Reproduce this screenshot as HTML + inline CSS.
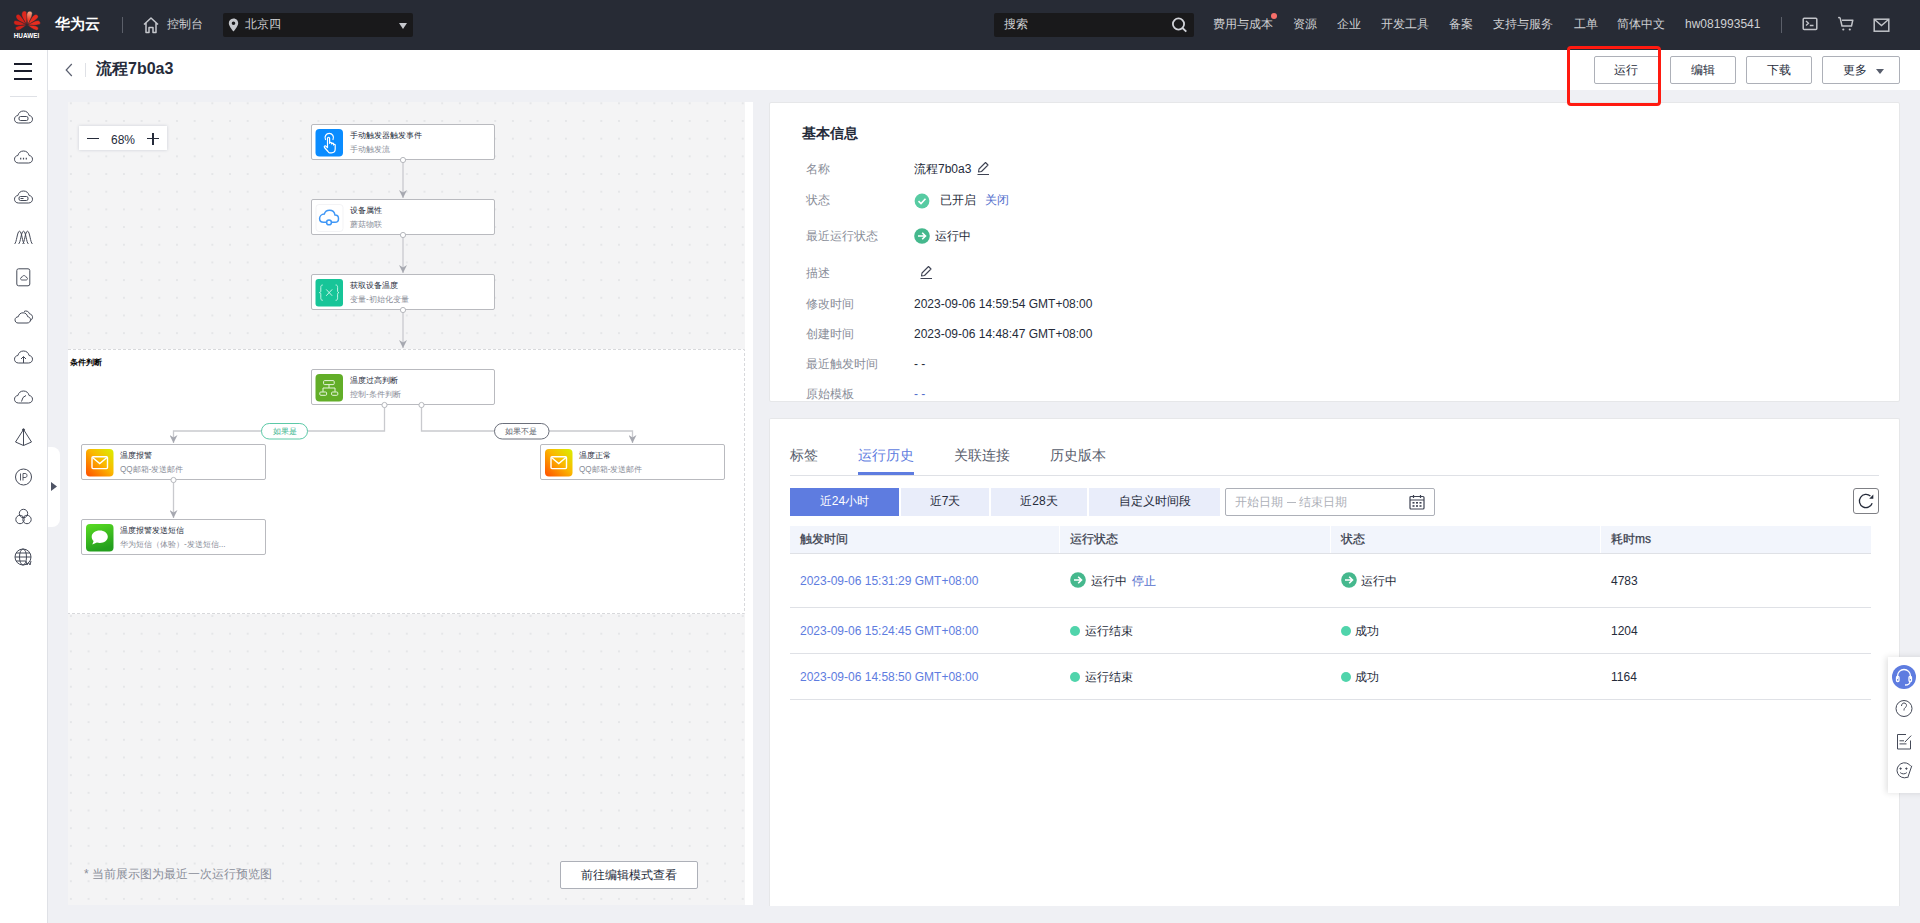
<!DOCTYPE html>
<html><head><meta charset="utf-8">
<style>
*{box-sizing:border-box;margin:0;padding:0}
html,body{width:1920px;height:923px;overflow:hidden;background:#eff0f4;font-family:"Liberation Sans",sans-serif;color:#252b3a;position:relative}
.a{position:absolute;white-space:nowrap}
#hdr{position:absolute;left:0;top:0;width:1920px;height:50px;background:#272b35}
.ht{position:absolute;top:16px;font-size:12px;line-height:17px;color:#cfd0d3;white-space:nowrap}
#side{position:absolute;left:0;top:50px;width:48px;height:873px;background:#fff;border-right:1px solid #dfe1e6}
#titlebar{position:absolute;left:48px;top:50px;width:1872px;height:40px;background:#fff}
.btn{position:absolute;top:56px;height:28px;border:1px solid #adb0b8;border-radius:2px;background:#fff;font-size:12px;line-height:26px;text-align:center;color:#252b3a}
#canvas{position:absolute;left:68px;top:102px;width:677px;height:803px;background:#f4f4f5}
#canvasStrip{position:absolute;left:745px;top:102px;width:8px;height:803px;background:#fff}
.panel{position:absolute;background:#fff;border:1px solid #e6e7e9;border-radius:2px;overflow:hidden}
.sico{position:absolute;left:13px;width:20px;height:20px}
.lbl{position:absolute;left:806px;font-size:12px;line-height:16px;color:#8a8e99;white-space:nowrap}
.val{position:absolute;left:914px;font-size:12px;line-height:16px;color:#252b3a;white-space:nowrap}
.nt{position:absolute;font-size:8.16px;line-height:11px;color:#252b3a;white-space:nowrap}
.ns{position:absolute;margin-top:1px;font-size:8.16px;line-height:10px;color:#8a8e99;white-space:nowrap}
.tab{position:absolute;top:446px;font-size:14px;line-height:19px;color:#575d6c;white-space:nowrap}
.seg{position:absolute;top:488px;height:28px;background:#e9edfa;font-size:12px;line-height:26px;text-align:center;color:#252b3a}
.th{position:absolute;top:531px;font-size:12px;line-height:16px;font-weight:normal;color:#3a3f4e;-webkit-text-stroke:0.25px #3a3f4e;white-space:nowrap}
.td{position:absolute;font-size:12px;line-height:16px;color:#252b3a;white-space:nowrap}
.lnk{color:#526ecc}
</style></head>
<body>
<div id="hdr">
  <svg class="a" style="left:13px;top:10px" width="28" height="30" viewBox="0 0 28 30">
    <defs><linearGradient id="lgp" x1="0" y1="0" x2="0" y2="1"><stop offset="0" stop-color="#f6b090"/><stop offset="0.6" stop-color="#f0402a"/></linearGradient></defs>
    <g stroke="#272b35" stroke-width="0.45">
    <path transform="translate(13.3 15) rotate(-10)" d="M0 0 C-0.99 -4.83 -4.12 -9.66 -1.98 -13.11 C-0.66 -14.49 1.98 -14.49 2.47 -12.42 C2.97 -8.28 1.32 -4.14 0 0Z" fill="#e0281e"/>
    <path transform="translate(14.7 15) rotate(10)" d="M0 0 C-0.99 -4.83 -4.12 -9.66 -1.98 -13.11 C-0.66 -14.49 1.98 -14.49 2.47 -12.42 C2.97 -8.28 1.32 -4.14 0 0Z" fill="url(#lgp)"/>
    <path transform="translate(13.5 15) rotate(-45)" d="M0 0 C-0.90 -4.83 -3.75 -9.66 -1.80 -13.11 C-0.60 -14.49 1.80 -14.49 2.25 -12.42 C2.70 -8.28 1.20 -4.14 0 0Z" fill="#d42219"/>
    <path transform="translate(14.5 15) rotate(45)" d="M0 0 C-0.90 -4.83 -3.75 -9.66 -1.80 -13.11 C-0.60 -14.49 1.80 -14.49 2.25 -12.42 C2.70 -8.28 1.20 -4.14 0 0Z" fill="#e82d1f"/>
    <path transform="translate(13.7 15) rotate(-78)" d="M0 0 C-0.84 -4.55 -3.50 -9.10 -1.68 -12.35 C-0.56 -13.65 1.68 -13.65 2.10 -11.70 C2.52 -7.80 1.12 -3.90 0 0Z" fill="#d42219"/>
    <path transform="translate(14.3 15) rotate(78)" d="M0 0 C-0.84 -4.55 -3.50 -9.10 -1.68 -12.35 C-0.56 -13.65 1.68 -13.65 2.10 -11.70 C2.52 -7.80 1.12 -3.90 0 0Z" fill="#e82d1f"/>
    <path transform="translate(13.7 15) rotate(-110)" d="M0 0 C-0.75 -4.02 -3.12 -8.05 -1.50 -10.92 C-0.50 -12.08 1.50 -12.08 1.88 -10.35 C2.25 -6.90 1.00 -3.45 0 0Z" fill="#d42219"/>
    <path transform="translate(14.3 15) rotate(110)" d="M0 0 C-0.75 -4.02 -3.12 -8.05 -1.50 -10.92 C-0.50 -12.08 1.50 -12.08 1.88 -10.35 C2.25 -6.90 1.00 -3.45 0 0Z" fill="#e82d1f"/>
    </g>
    <text x="13.5" y="28" text-anchor="middle" font-family="Liberation Sans" font-weight="bold" font-size="6.3" fill="#fff" textLength="25.5" lengthAdjust="spacingAndGlyphs">HUAWEI</text>
  </svg>
  <div class="a" style="left:55px;top:14px;font-size:15px;line-height:20px;color:#fff;font-weight:bold">华为云</div>
  <div class="a" style="left:122px;top:17px;width:1px;height:16px;background:#5b5f69"></div>
  <svg class="a" style="left:142px;top:16px" width="18" height="18" viewBox="0 0 18 18"><path d="M2 8.5 L9 2 L16 8.5 M4 7 V16.5 H7 V11.5 H11 V16.5 H14 V7" fill="none" stroke="#c6c8cd" stroke-width="1.5" stroke-linejoin="round"/></svg>
  <div class="ht" style="left:167px">控制台</div>
  <div class="a" style="left:223px;top:13px;width:190px;height:24px;background:#19191b;border-radius:2px"></div>
  <svg class="a" style="left:228px;top:18px" width="12" height="14" viewBox="0 0 12 14"><path d="M5.5 0.5 C2.5 0.5 0.8 2.7 0.8 5.2 C0.8 8.3 5.5 13.5 5.5 13.5 C5.5 13.5 10.2 8.3 10.2 5.2 C10.2 2.7 8.5 0.5 5.5 0.5Z M5.5 3.4 A1.8 1.8 0 1 1 5.5 7 A1.8 1.8 0 1 1 5.5 3.4Z" fill="#c6c8cd" fill-rule="evenodd"/></svg>
  <div class="ht" style="left:245px">北京四</div>
  <svg class="a" style="left:399px;top:23px" width="8" height="6" viewBox="0 0 8 6"><path d="M0 0 H8 L4 6Z" fill="#c6c8cd"/></svg>
  <div class="a" style="left:994px;top:13px;width:200px;height:24px;background:#19191b;border-radius:2px"></div>
  <div class="ht" style="left:1004px">搜索</div>
  <svg class="a" style="left:1170px;top:16px" width="18" height="18" viewBox="0 0 18 18"><circle cx="8.5" cy="8" r="5.6" fill="none" stroke="#d0d2d8" stroke-width="1.8"/><path d="M12.5 12 L16.3 15.6" stroke="#d0d2d8" stroke-width="1.8"/></svg>
  <div class="ht" style="left:1213px">费用与成本</div>
  <div class="a" style="left:1271px;top:13px;width:6px;height:6px;border-radius:50%;background:#f66f6a"></div>
  <div class="ht" style="left:1293px">资源</div>
  <div class="ht" style="left:1337px">企业</div>
  <div class="ht" style="left:1381px">开发工具</div>
  <div class="ht" style="left:1449px">备案</div>
  <div class="ht" style="left:1493px">支持与服务</div>
  <div class="ht" style="left:1574px">工单</div>
  <div class="ht" style="left:1617px">简体中文</div>
  <div class="ht" style="left:1685px">hw081993541</div>
  <div class="a" style="left:1781px;top:17px;width:1px;height:16px;background:#5b5f69"></div>
  <svg class="a" style="left:1802px;top:17px" width="16" height="14" viewBox="0 0 16 14"><rect x="1.2" y="1.2" width="13.6" height="11.4" rx="1" fill="none" stroke="#c2c4c9" stroke-width="1.5"/><path d="M4 4 L6.5 6.3 L4 8.6 M7.8 8.5 H11.5" fill="none" stroke="#c2c4c9" stroke-width="1.3"/></svg>
  <svg class="a" style="left:1837px;top:16px" width="18" height="16" viewBox="0 0 18 16"><path d="M1.2 1.8 C2.5 1.2 3 1.6 3.3 2.6 L5 10 H14.5 L15.8 4.2 H5" fill="none" stroke="#c2c4c9" stroke-width="1.5" stroke-linejoin="round"/><circle cx="6.3" cy="13.5" r="1.1" fill="#c2c4c9"/><circle cx="12.8" cy="13.5" r="1.1" fill="#c2c4c9"/></svg>
  <svg class="a" style="left:1873px;top:18px" width="17" height="15" viewBox="0 0 17 15"><rect x="1.2" y="1.2" width="14.6" height="12" fill="none" stroke="#c2c4c9" stroke-width="1.5"/><path d="M1.5 1.5 L8.5 7.5 L15.5 1.5" fill="none" stroke="#c2c4c9" stroke-width="1.5"/></svg>
</div>
<div id="side">
  <div class="a" style="left:14px;top:13px;width:18px;height:2px;background:#191c2a"></div>
  <div class="a" style="left:14px;top:20px;width:18px;height:2px;background:#191c2a"></div>
  <div class="a" style="left:14px;top:28px;width:18px;height:2px;background:#191c2a"></div>
  <div class="a" style="left:10px;top:46px;width:27px;height:1px;background:#dfe1e6"></div>
</div>
<svg class="a" style="left:0;top:100px" width="47" height="480" viewBox="0 100 47 480" fill="none" stroke="#454a58" stroke-width="1">
  <defs><path id="cl" d="M5 14 H15 C17.5 14 19 12.3 19 10.2 C19 8.2 17.6 6.7 15.6 6.5 C15 3.7 12.8 2 10 2 C7.2 2 5 3.7 4.4 6.5 C2.4 6.7 1 8.2 1 10.2 C1 12.3 2.5 14 5 14Z"/></defs>
  <g transform="translate(13.5 109)"><use href="#cl"/><rect x="5.5" y="7.5" width="9" height="4" rx="1.5"/></g>
  <g transform="translate(13.5 149)"><use href="#cl"/><path d="M6.6 9.6h1.2M9.4 9.6h1.2M12.2 9.6h1.2" stroke-width="1.7"/></g>
  <g transform="translate(13.5 189)"><use href="#cl"/><rect x="5.5" y="7.5" width="9" height="4" rx="1.5"/><path d="M7 9.5h3"/></g>
  <g transform="translate(13.5 229)"><path d="M1 15 C3.2 14 3.6 2.2 6 2.2 C8.4 2.2 8.8 14 11 15 M5 15 C7.2 14 7.6 2.2 10 2.2 C12.4 2.2 12.8 14 15 15 M9 15 C11.2 14 11.6 2.2 14 2.2 C16.4 2.2 16.8 14 19 15"/></g>
  <g transform="translate(13.5 268)"><rect x="3.3" y="0.8" width="13" height="17" rx="1.8"/><path d="M8.5 12 H12.5 C13.5 12 14 11.3 14 10.6 C14 9.8 13.3 9.3 12.6 9.3 C12.4 8.3 11.6 7.6 10.5 7.6 C9.4 7.6 8.6 8.3 8.4 9.3 C7.7 9.3 7 9.8 7 10.6 C7 11.3 7.5 12 8.5 12Z" stroke-width="0.9"/></g>
  <g transform="translate(13.5 308)"><path d="M4.5 15 H13.5 C15.8 15 17 13.6 17 11.8 C17 10.1 15.8 8.9 14.2 8.7 C13.7 6.3 11.9 4.8 9.5 4.8 C7.1 4.8 5.3 6.3 4.8 8.7 C2.9 8.9 1.5 10.1 1.5 11.8 C1.5 13.6 2.7 15 4.5 15Z"/><path d="M10.5 3.5 C12.5 2.3 15.3 3.2 16 5.8 C18 6.2 19.3 7.7 19 9.8 C18.8 11 18 12 17 12.5"/></g>
  <g transform="translate(13.5 349)"><use href="#cl"/><path d="M10 14 V8 M7.5 10 L10 7.5 L12.5 10"/></g>
  <g transform="translate(13.5 389)"><use href="#cl"/><path d="M8 12.5 L9.5 8.5 L12.5 6.5" /></g>
  <g transform="translate(13.5 428)"><path d="M10 1.5 L2 14 L10 17.5 L18 14 Z M10 1.5 V17.5"/><circle cx="10" cy="1.8" r="1" fill="#3b3f4d"/></g>
  <g transform="translate(13.5 468)"><circle cx="10" cy="9" r="8"/><path d="M7 5.5 V12.5 M9.5 12.5 V5.5 H11.5 C13 5.5 13.5 6.5 13.5 7.5 C13.5 8.5 13 9.5 11.5 9.5 H9.5" stroke-width="0.9"/></g>
  <g transform="translate(13.5 508)"><circle cx="10" cy="5.5" r="4.2"/><circle cx="6.5" cy="11.5" r="4.2"/><circle cx="13.5" cy="11.5" r="4.2"/></g>
  <g transform="translate(13.5 548)"><circle cx="9.5" cy="9" r="8"/><ellipse cx="9.5" cy="9" rx="3.5" ry="8"/><path d="M1.5 9 H17.5 M2.5 5 H16.5 M2.5 13 H12"/><path d="M12.5 13 L13.5 17 L15 14.5 L16.5 17 L17.5 13" stroke-width="1"/></g>
</svg>
<div class="a" style="left:48px;top:447px;width:12px;height:80px;background:#fff;border-radius:0 8px 8px 0"></div>
<svg class="a" style="left:51px;top:482px" width="6" height="9" viewBox="0 0 6 9"><path d="M0 0 L6 4.5 L0 9Z" fill="#4f5465"/></svg>

<div id="titlebar">
  <svg class="a" style="left:16px;top:13px" width="10" height="14" viewBox="0 0 10 14"><path d="M7.8 1 L2.2 7 L7.8 13" fill="none" stroke="#5b6070" stroke-width="1.2"/></svg>
  <div class="a" style="left:37px;top:13px;width:1px;height:14px;background:#dfe1e6"></div>
  <div class="a" style="left:48px;top:8px;font-size:16px;line-height:22px;font-weight:bold;color:#252b3a">流程7b0a3</div>
</div>
<div class="btn" style="left:1594px;width:66px;padding-right:2px">运行</div>
<div class="btn" style="left:1670px;width:66px">编辑</div>
<div class="btn" style="left:1746px;width:66px">下载</div>
<div class="btn" style="left:1822px;width:78px;text-align:left;padding-left:20px">更多<svg style="position:absolute;left:52.5px;top:11.5px" width="8" height="5" viewBox="0 0 8 5"><path d="M0 0 H8 L4 5Z" fill="#575d6c"/></svg></div>
<div id="canvas"></div>
<div id="canvasStrip"></div>
<svg class="a" style="left:68px;top:102px" width="677" height="803" viewBox="68 102 677 803">
  <defs>
    <pattern id="dots" patternUnits="userSpaceOnUse" x="62.06" y="94.46" width="17.68" height="17.68"><circle cx="8.84" cy="8.84" r="1" fill="#e1e2e5"/></pattern>
    <linearGradient id="gmail" x1="0" y1="1" x2="1" y2="0"><stop offset="0" stop-color="#ff4d00"/><stop offset="0.55" stop-color="#fbb800"/><stop offset="1" stop-color="#d9f000"/></linearGradient>
    <linearGradient id="gsms" x1="0" y1="0" x2="0.3" y2="1"><stop offset="0" stop-color="#5add22"/><stop offset="1" stop-color="#239f1d"/></linearGradient>
    <marker id="arr" viewBox="0 0 10 10" refX="10" refY="5" markerWidth="8" markerHeight="8" orient="auto" markerUnits="userSpaceOnUse"><path d="M0 0 L10 5 L0 10 L3 5Z" fill="#a6a8b0"/></marker>
  </defs>
  <rect x="68" y="102" width="677" height="803" fill="url(#dots)"/>
  <rect x="60" y="349" width="685" height="265" fill="#fff"/>
  <path d="M68 349.5 H744.5 V613.5 H68" fill="none" stroke="#d8d9dc" stroke-width="1" stroke-dasharray="3 2"/>
  <g fill="none" stroke="#c9cace" stroke-width="1.3">
    <path d="M403 160 V198" marker-end="url(#arr)"/>
    <path d="M403 235 V273" marker-end="url(#arr)"/>
    <path d="M403 310 V348" marker-end="url(#arr)"/>
    <path d="M384.5 405 V431 H173.5 V443" marker-end="url(#arr)"/>
    <path d="M421.5 405 V431 H632.5 V443" marker-end="url(#arr)"/>
    <path d="M173.5 480 V518" marker-end="url(#arr)"/>
  </g>
  <g fill="#fff" stroke="#b9babf" stroke-width="1">
    <rect x="311.5" y="124.5" width="183" height="35" rx="1.5"/>
    <rect x="311.5" y="199.5" width="183" height="35" rx="1.5"/>
    <rect x="311.5" y="274.5" width="183" height="35" rx="1.5"/>
    <rect x="311.5" y="369.5" width="183" height="35" rx="1.5"/>
    <rect x="81.5" y="444.5" width="184" height="35" rx="1.5"/>
    <rect x="540.5" y="444.5" width="184" height="35" rx="1.5"/>
    <rect x="81.5" y="519.5" width="184" height="35" rx="1.5"/>
  </g>
  <g fill="#fff" stroke="#b6b8bd" stroke-width="1">
    <circle cx="403" cy="160" r="2.6"/><circle cx="403" cy="235" r="2.6"/><circle cx="403" cy="310" r="2.6"/>
    <circle cx="384.5" cy="405" r="2.6"/><circle cx="421.5" cy="405" r="2.6"/><circle cx="173.5" cy="480" r="2.6"/>
  </g>
  <!-- pills -->
  <rect x="261.5" y="423.5" width="46" height="15.5" rx="7.7" fill="#fff" stroke="#5cc9a7" stroke-width="1"/>
  <rect x="494.5" y="423.5" width="54.5" height="15.5" rx="7.7" fill="#fff" stroke="#6b6f7b" stroke-width="1"/>
  <!-- icons -->
  <rect x="315.5" y="129" width="27.5" height="27.5" rx="4" fill="#0a8cff"/>
  <g fill="none" stroke="#fff" stroke-width="1.2" stroke-linecap="round" stroke-linejoin="round">
    <path d="M325.5 139.5 A4.2 4.2 0 1 1 333 139.5"/>
    <path d="M328 151.5 L324.5 147.5 C323.8 146.6 324.8 145.4 325.8 146.1 L327.5 147.5 V138.3 C327.5 136.9 329.6 136.9 329.6 138.3 V143.3 C329.6 142.1 331.6 142.1 331.6 143.3 V144 C331.6 142.9 333.5 142.9 333.5 144 V145 C333.5 144.1 335.2 144.1 335.2 145 V149 C335.2 150.8 334 152.8 331.5 152.8 H329.5 C328.8 152.8 328.4 152.2 328 151.5Z"/>
  </g>
  <rect x="316" y="204.5" width="27" height="27" rx="3" fill="#fff" stroke="#f0f0f2" stroke-width="0.8"/>
  <g fill="none" stroke="#3f97f6" stroke-width="1.5">
    <path d="M323.5 222.3 H335 C337 222.3 338.5 220.8 338.5 218.7 C338.5 216.6 337 215.1 335 215.1 C334.5 212.2 332.3 210.3 329.5 210.3 C327 210.3 325 211.8 324.3 214 C321.6 214.2 319.6 216.3 319.6 218.5 C319.6 220.7 321.3 222.3 323.5 222.3Z"/>
    <circle cx="329" cy="222.4" r="2.4" fill="#fff"/>
  </g>
  <rect x="315.5" y="279" width="27.5" height="27.5" rx="3" fill="#17c598"/>
  <g fill="none" stroke="#d8f6ec" stroke-width="0.9"><path d="M322.8 285 C321 285 320.8 286 320.8 287.5 V291 C320.8 292 320.2 292.6 319.4 292.6 C320.2 292.6 320.8 293.2 320.8 294.2 V297.8 C320.8 299.3 321 300.3 322.8 300.3"/><path d="M 335.6 285.0 C 337.4 285.0 337.6 286.0 337.6 287.5 V 291.0 C 337.6 292.0 338.2 292.6 339.0 292.6 C 338.2 292.6 337.6 293.2 337.6 294.2 V 297.8 C 337.6 299.3 337.4 300.3 335.6 300.3"/><path d="M326.2 289.4 L332.2 295.8 M332.2 289.4 L326.2 295.8"/></g>
  <rect x="315.5" y="374" width="27.5" height="27.5" rx="4" fill="#62ae28"/>
  <g fill="none" stroke="#e6f4dc" stroke-width="1">
    <rect x="323.6" y="380.6" width="10.6" height="4" rx="1"/>
    <path d="M329 384.6 V388 M323 391.8 V388 H335 V391.8"/>
    <rect x="319.8" y="392" width="6.8" height="3.3" rx="1"/>
    <rect x="331.6" y="392" width="6.2" height="3.3" rx="1"/>
  </g>
  <rect x="86" y="449" width="27.5" height="27.5" rx="4" fill="url(#gmail)"/>
  <rect x="545" y="449" width="27.5" height="27.5" rx="4" fill="url(#gmail)"/>
  <g fill="none" stroke="#fff" stroke-width="1.4">
    <rect x="92" y="456.8" width="15.5" height="11.8" rx="1"/><path d="M92.5 457.5 L99.75 463.5 L107 457.5"/>
    <rect x="551" y="456.8" width="15.5" height="11.8" rx="1"/><path d="M551.5 457.5 L558.75 463.5 L566 457.5"/>
  </g>
  <rect x="86" y="524" width="27.5" height="27.5" rx="4" fill="url(#gsms)"/>
  <path d="M99.8 530.5 C104.3 530.5 107.8 533.2 107.8 536.7 C107.8 540.2 104.3 542.9 99.8 542.9 C98.8 542.9 97.8 542.8 96.9 542.5 L92.3 544.5 L93.6 541 C92.3 539.9 91.7 538.4 91.7 536.7 C91.7 533.2 95.3 530.5 99.8 530.5Z" fill="#fff"/>
</svg>
<div class="a" style="left:69.5px;top:356.5px;font-size:8.16px;line-height:12px;font-weight:bold;color:#000">条件判断</div>
<div class="nt" style="left:350px;top:130px">手动触发器触发事件</div>
<div class="ns" style="left:350px;top:144px">手动触发流</div>
<div class="nt" style="left:350px;top:205px">设备属性</div>
<div class="ns" style="left:350px;top:219px">蘑菇物联</div>
<div class="nt" style="left:350px;top:280px">获取设备温度</div>
<div class="ns" style="left:350px;top:294px">变量-初始化变量</div>
<div class="nt" style="left:350px;top:375px">温度过高判断</div>
<div class="ns" style="left:350px;top:389px">控制-条件判断</div>
<div class="nt" style="left:120px;top:450px">温度报警</div>
<div class="ns" style="left:120px;top:464px">QQ邮箱-发送邮件</div>
<div class="nt" style="left:579px;top:450px">温度正常</div>
<div class="ns" style="left:579px;top:464px">QQ邮箱-发送邮件</div>
<div class="nt" style="left:120px;top:525px">温度报警发送短信</div>
<div class="ns" style="left:120px;top:539px">华为短信（体验）-发送短信...</div>
<div class="a" style="left:272.5px;top:426.5px;font-size:8.16px;line-height:10px;color:#3cb58f">如果是</div>
<div class="a" style="left:505px;top:426.5px;font-size:8.16px;line-height:10px;color:#5a5e6b">如果不是</div>
<!-- zoom ctrl -->
<div class="a" style="left:79px;top:126px;width:88px;height:24px;background:#fff;box-shadow:0 0 3px rgba(80,90,120,0.25)"></div>
<div class="a" style="left:87px;top:137.9px;width:12px;height:1.3px;background:#252b3a"></div>
<div class="a" style="left:111px;top:132px;font-size:12px;line-height:16px;color:#252b3a">68%</div>
<div class="a" style="left:147px;top:137.9px;width:12px;height:1.3px;background:#252b3a"></div>
<div class="a" style="left:152.3px;top:133px;width:1.3px;height:11.5px;background:#252b3a"></div>
<div class="a" style="left:84px;top:866px;font-size:12px;line-height:16px;color:#8a8e99">* 当前展示图为最近一次运行预览图</div>
<div class="a" style="left:560px;top:861px;width:138px;height:28px;border:1px solid #adb0b8;border-radius:2px;background:#fff;font-size:12px;line-height:26px;text-align:center;color:#252b3a">前往编辑模式查看</div>
<div class="panel" style="left:769px;top:102px;width:1131px;height:300px"></div>
<div class="a" style="left:802px;top:124px;font-size:14px;line-height:19px;font-weight:bold;color:#252b3a">基本信息</div>
<div class="lbl" style="top:161px">名称</div><div class="val" style="top:161px">流程7b0a3</div>
<svg class="a" style="left:976px;top:161px" width="15" height="15" viewBox="0 0 15 15"><path d="M2.5 11 L3 8 L9.5 1.5 L12 4 L5.5 10.5Z M1.5 13.5 H13" fill="none" stroke="#3e4353" stroke-width="1.1" stroke-linejoin="round"/></svg>
<div class="lbl" style="top:192px">状态</div>
<svg class="a" style="left:914px;top:193px" width="16" height="16" viewBox="0 0 16 16"><circle cx="8" cy="8" r="7.4" fill="#57cba2"/><path d="M4.5 8.2 L7 10.6 L11.5 5.8" fill="none" stroke="#fff" stroke-width="1.6"/></svg>
<div class="val" style="left:940px;top:192px">已开启</div><div class="val lnk" style="left:985px;top:192px">关闭</div>
<div class="lbl" style="top:228px">最近运行状态</div>
<svg class="a" style="left:914px;top:228px" width="16" height="16" viewBox="0 0 16 16"><circle cx="8" cy="8" r="7.8" fill="#45b88d"/><path d="M4 8 H11.5 M8.2 4.8 L11.5 8 L8.2 11.2" fill="none" stroke="#fff" stroke-width="1.6"/></svg>
<div class="val" style="left:935px;top:228px">运行中</div>
<div class="lbl" style="top:265px">描述</div>
<svg class="a" style="left:919px;top:265px" width="15" height="15" viewBox="0 0 15 15"><path d="M2.5 11 L3 8 L9.5 1.5 L12 4 L5.5 10.5Z M1.5 13.5 H13" fill="none" stroke="#3e4353" stroke-width="1.1" stroke-linejoin="round"/></svg>
<div class="lbl" style="top:296px">修改时间</div><div class="val" style="top:296px">2023-09-06 14:59:54 GMT+08:00</div>
<div class="lbl" style="top:326px">创建时间</div><div class="val" style="top:326px">2023-09-06 14:48:47 GMT+08:00</div>
<div class="lbl" style="top:356px">最近触发时间</div><div class="val" style="top:356px">- -</div>
<div style="position:absolute;left:770px;top:380px;width:400px;height:20.5px;overflow:hidden">
  <div class="lbl" style="left:36px;top:6px">原始模板</div><div class="val lnk" style="left:144px;top:6px">- -</div>
</div>

<div class="panel" style="left:769px;top:418px;width:1131px;height:488px;border-bottom:none;border-radius:2px 2px 0 0"></div>
<div class="tab" style="left:790px">标签</div>
<div class="tab" style="left:858px;color:#5e7ce0">运行历史</div>
<div class="tab" style="left:954px">关联连接</div>
<div class="tab" style="left:1050px">历史版本</div>
<div class="a" style="left:790px;top:475px;width:1089px;height:1px;background:#dfe1e6"></div>
<div class="a" style="left:858px;top:472px;width:56px;height:3px;background:#5e7ce0"></div>
<div class="seg" style="left:790px;width:109px;background:#5e7ce0;color:#fff">近24小时</div>
<div class="seg" style="left:901px;width:88px">近7天</div>
<div class="seg" style="left:991px;width:96px">近28天</div>
<div class="seg" style="left:1089px;width:131px">自定义时间段</div>
<div class="a" style="left:1225px;top:488px;width:210px;height:28px;border:1px solid #adb0b8;border-radius:2px;background:#fff"></div>
<div class="a" style="left:1235px;top:494px;font-size:12px;line-height:16px;color:#adb0b8">开始日期</div><div class="a" style="left:1287px;top:501.5px;width:8.6px;height:1px;background:#b5b8bf"></div><div class="a" style="left:1298.5px;top:494px;font-size:12px;line-height:16px;color:#adb0b8">结束日期</div>
<svg class="a" style="left:1409px;top:494px" width="16" height="16" viewBox="0 0 16 16"><rect x="1" y="2.5" width="14" height="12.5" rx="1" fill="none" stroke="#3e4353" stroke-width="1.2"/><path d="M1 6 H15 M4.5 1 V4 M11.5 1 V4" stroke="#3e4353" stroke-width="1.2"/><g fill="#3e4353"><rect x="3.5" y="8" width="2" height="1.6"/><rect x="7" y="8" width="2" height="1.6"/><rect x="10.5" y="8" width="2" height="1.6"/><rect x="3.5" y="11.2" width="2" height="1.6"/><rect x="7" y="11.2" width="2" height="1.6"/><rect x="10.5" y="11.2" width="2" height="1.6"/></g></svg>
<div class="a" style="left:1853px;top:488px;width:26px;height:26px;border:1px solid #7f8085;border-radius:3px;background:#fff"></div>
<svg class="a" style="left:1856px;top:491px" width="20" height="20" viewBox="0 0 20 20"><path d="M16.2 12.3 A6.6 6.6 0 1 1 14.4 5.1" fill="none" stroke="#252b3a" stroke-width="1.3"/><path d="M17.3 3.6 V7.7 H13.2Z" fill="#252b3a"/></svg>

<div class="a" style="left:790px;top:526px;width:1081px;height:28px;background:#f2f5fc;border-bottom:1px solid #dfe1e6"></div>
<div class="a" style="left:1059px;top:526px;width:1px;height:27px;background:#fff"></div>
<div class="a" style="left:1330px;top:526px;width:1px;height:27px;background:#fff"></div>
<div class="a" style="left:1600px;top:526px;width:1px;height:27px;background:#fff"></div>
<div class="th" style="left:800px">触发时间</div>
<div class="th" style="left:1070px">运行状态</div>
<div class="th" style="left:1341px">状态</div>
<div class="th" style="left:1611px">耗时ms</div>

<div class="a" style="left:790px;top:607px;width:1081px;height:1px;background:#dfe1e6"></div>
<div class="a" style="left:790px;top:653px;width:1081px;height:1px;background:#dfe1e6"></div>
<div class="a" style="left:790px;top:699px;width:1081px;height:1px;background:#dfe1e6"></div>

<div class="td lnk" style="left:800px;top:573px;color:#5e7ce0">2023-09-06 15:31:29 GMT+08:00</div>
<svg class="a" style="left:1070px;top:572px" width="16" height="16" viewBox="0 0 16 16"><circle cx="8" cy="8" r="7.8" fill="#45b88d"/><path d="M4 8 H11.5 M8.2 4.8 L11.5 8 L8.2 11.2" fill="none" stroke="#fff" stroke-width="1.6"/></svg>
<div class="td" style="left:1091px;top:573px">运行中</div><div class="td lnk" style="left:1132px;top:573px">停止</div>
<svg class="a" style="left:1341px;top:572px" width="16" height="16" viewBox="0 0 16 16"><circle cx="8" cy="8" r="7.8" fill="#45b88d"/><path d="M4 8 H11.5 M8.2 4.8 L11.5 8 L8.2 11.2" fill="none" stroke="#fff" stroke-width="1.6"/></svg>
<div class="td" style="left:1361px;top:573px">运行中</div>
<div class="td" style="left:1611px;top:573px">4783</div>

<div class="td lnk" style="left:800px;top:623px;color:#5e7ce0">2023-09-06 15:24:45 GMT+08:00</div>
<div class="a" style="left:1070px;top:626px;width:10px;height:10px;border-radius:50%;background:#50d4ab"></div>
<div class="td" style="left:1085px;top:623px">运行结束</div>
<div class="a" style="left:1341px;top:626px;width:10px;height:10px;border-radius:50%;background:#50d4ab"></div>
<div class="td" style="left:1355px;top:623px">成功</div>
<div class="td" style="left:1611px;top:623px">1204</div>

<div class="td lnk" style="left:800px;top:669px;color:#5e7ce0">2023-09-06 14:58:50 GMT+08:00</div>
<div class="a" style="left:1070px;top:672px;width:10px;height:10px;border-radius:50%;background:#50d4ab"></div>
<div class="td" style="left:1085px;top:669px">运行结束</div>
<div class="a" style="left:1341px;top:672px;width:10px;height:10px;border-radius:50%;background:#50d4ab"></div>
<div class="td" style="left:1355px;top:669px">成功</div>
<div class="td" style="left:1611px;top:669px">1164</div>

<!-- floating toolbar -->
<div class="a" style="left:1888px;top:657px;width:40px;height:136px;background:#fff;box-shadow:-2px 0 6px rgba(0,0,0,0.12)"></div>
<svg class="a" style="left:1890px;top:662px" width="30" height="125" viewBox="1890 662 30 125">
  <circle cx="1904" cy="677" r="12" fill="#5e7ce0"/>
  <g fill="none" stroke="#fff" stroke-width="1.3"><path d="M1897.5 679 V676 A6.5 6.5 0 0 1 1910.5 676 V679"/><rect x="1896.5" y="676.5" width="2.5" height="5" rx="1"/><rect x="1909" y="676.5" width="2.5" height="5" rx="1"/><path d="M1910 681.5 C1910 684 1908 685 1905 685"/></g>
  <g fill="none" stroke="#454a58" stroke-width="1">
    <circle cx="1904" cy="708.5" r="8"/><path d="M1901.5 706 C1901.5 704 1902.8 703 1904 703 C1905.5 703 1906.5 704 1906.5 705.5 C1906.5 707.5 1904 707.5 1904 709.8 V710.5"/>
    <path d="M1906 734.5 H1897.5 V749 H1910.5 V740.5 M1904.8 742.2 L1911.2 735.6 M1899.5 740.8 H1904 M1899.5 743.9 H1906.5"/>
    <path d="M1910.8 766.2 A7.5 7.5 0 1 0 1907.2 777.3 M1911.8 765.8 L1907.6 778"/><circle cx="1900.6" cy="768.6" r="0.7" fill="#3b3f4d"/><circle cx="1906.4" cy="768.6" r="0.7" fill="#3b3f4d"/><path d="M1900.2 772.6 C1902 774.3 1905 774.3 1906.8 772.6"/>
  </g>
</svg>

<!-- red highlight -->
<div class="a" style="left:1567px;top:46px;width:94px;height:60px;border:3px solid #ff1a10;border-radius:4px"></div>
</body></html>
